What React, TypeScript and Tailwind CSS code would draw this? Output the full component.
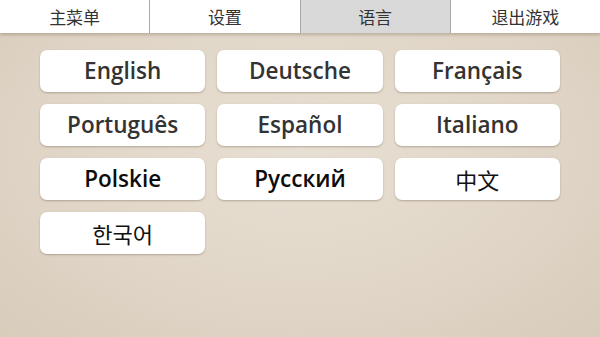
const tabs = ['主菜单', '设置', '语言', '退出游戏']

const languages: { label: string; cjk?: boolean; heavy?: boolean }[] = [
  { label: 'English' },
  { label: 'Deutsche' },
  { label: 'Français' },
  { label: 'Português' },
  { label: 'Español' },
  { label: 'Italiano' },
  { label: 'Polskie', heavy: true },
  { label: 'Русский', heavy: true },
  { label: '中文', cjk: true },
  { label: '한국어', cjk: true },
]

function LangButton({ label, cjk, heavy }: { label: string; cjk?: boolean; heavy?: boolean }) {
  return (
    <button
      className={`h-[42px] rounded-[7px] bg-white shadow-[0_1px_2px_rgba(90,70,50,0.35)] flex items-center justify-center ${
        cjk
          ? "text-[22px] text-[#111] font-normal font-['Noto_Sans_CJK_SC','Noto_Sans_CJK_KR',sans-serif]"
          : `text-[22.5px] font-semibold font-['Open_Sans','Noto_Sans',sans-serif] ${heavy ? 'text-[#0d0d0d]' : 'text-[#333]'}`
      }`}
    >
      {label}
    </button>
  )
}

export default function App() {
  return (
    <div className="w-[600px] h-[337px] overflow-hidden flex flex-col bg-[radial-gradient(ellipse_at_50%_45%,#e7dfd2_0%,#e2d8ca_45%,#d8ccbb_100%)]">
      <div className="h-[33px] flex bg-white shadow-[0_2px_3px_rgba(120,100,80,0.35)] relative z-10">
        {tabs.map((t, i) => (
          <div
            key={t}
            className={`flex-1 flex items-center justify-center text-[17px] text-[#333] font-['Noto_Sans_CJK_SC',sans-serif] ${
              i > 0 ? 'border-l border-[#a8a8a8]' : ''
            } ${i === 2 ? 'bg-[#d9d9d9]' : ''}`}
          >
            {t}
          </div>
        ))}
      </div>
      <div className="grid grid-cols-3 gap-x-3 gap-y-3 px-10 pt-[17px]">
        {languages.map((l) => (
          <LangButton key={l.label} label={l.label} cjk={l.cjk} heavy={l.heavy} />
        ))}
      </div>
    </div>
  )
}
